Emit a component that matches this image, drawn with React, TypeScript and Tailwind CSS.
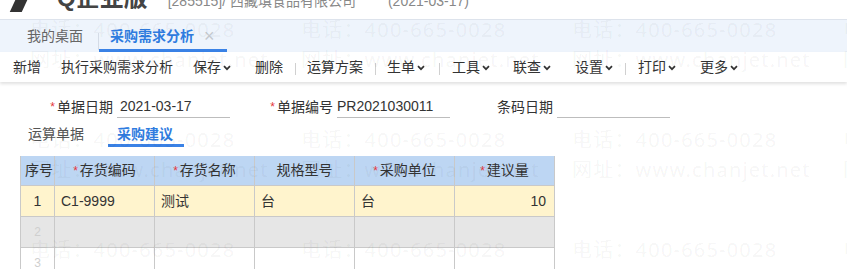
const marks = [
  { x: 30, y: 30, t: '电话：400-665-0028' },
  { x: 301, y: 30, t: '电话：400-665-0028' },
  { x: 572, y: 30, t: '电话：400-665-0028' },
  { x: 843, y: 30, t: '电话：400-665-0028' },
  { x: 30, y: 60, t: '网址：www.chanjet.net' },
  { x: 301, y: 60, t: '网址：www.chanjet.net' },
  { x: 572, y: 60, t: '网址：www.chanjet.net' },
  { x: 843, y: 60, t: '网址：www.chanjet.net' },
  { x: 30, y: 140, t: '电话：400-665-0028' },
  { x: 301, y: 140, t: '电话：400-665-0028' },
  { x: 572, y: 140, t: '电话：400-665-0028' },
  { x: 843, y: 140, t: '电话：400-665-0028' },
  { x: 30, y: 170, t: '网址：www.chanjet.net' },
  { x: 301, y: 170, t: '网址：www.chanjet.net' },
  { x: 572, y: 170, t: '网址：www.chanjet.net' },
  { x: 843, y: 170, t: '网址：www.chanjet.net' },
  { x: 30, y: 250, t: '电话：400-665-0028' },
  { x: 301, y: 250, t: '电话：400-665-0028' },
  { x: 572, y: 250, t: '电话：400-665-0028' },
  { x: 843, y: 250, t: '电话：400-665-0028' },
]

function Chevron() {
  return (
    <svg width="8" height="6" viewBox="0 0 8 6" className="ml-[2px] mt-[1px]">
      <path d="M1 1.2l3 3 3-3" fill="none" stroke="#333" strokeWidth="1.7" />
    </svg>
  )
}

function Sep() {
  return <span className="w-px h-[12px] bg-[#d0d0d0] mt-[3px]" />
}

function Star() {
  return <span className="text-[#e5383b] text-[12px] mr-[2px]">*</span>
}

const cols = [
  { w: 'w-[34px]', label: '序号', star: false, align: 'text-left pl-[4px]' },
  { w: 'w-[100px]', label: '存货编码', star: true, align: 'text-center' },
  { w: 'w-[100px]', label: '存货名称', star: true, align: 'text-center' },
  { w: 'w-[100px]', label: '规格型号', star: false, align: 'text-center' },
  { w: 'w-[100px]', label: '采购单位', star: true, align: 'text-center' },
  { w: 'w-[100px]', label: '建议量', star: true, align: 'text-center' },
]

export default function App() {
  return (
    <div className="relative w-[847px] h-[269px] overflow-hidden bg-white text-[#333] text-[14px] font-['Liberation_Sans','Noto_Sans_CJK_SC',sans-serif]">
      {/* top header, cut off */}
      <div className="h-[19px] overflow-hidden">
        <div className="-mt-[15px] flex items-baseline h-[26px] leading-[26px]">
          <span className="ml-[13px] w-[12px] h-[14px] bg-[#333] skew-x-[-25deg] self-start mt-[13px]" />
          <span className="ml-[32px] text-[24px] font-bold text-[#444]">Q企业版</span>
          <span className="ml-[20px] text-[14px] text-[#888]">[285515]/ 西藏填食品有限公司</span>
          <span className="ml-[32px] text-[14px] text-[#888]">(2021-03-17)</span>
        </div>
      </div>

      {/* tab bar */}
      <div className="h-[33px] border-t border-[#dde3ec] bg-[#eef4fc] flex items-end">
        <div className="h-[32px] flex items-center pl-[27px] pr-[15px] text-[#666]">我的桌面</div>
        <div className="w-px h-[17px] bg-[#d4dbe6] mb-[2px]" />
        <div className="h-[32px] w-[128px] flex items-center pl-[11px] border-b-[3px] border-[#3a82e6]">
          <span className="text-[#2f7ce0] font-bold pt-[3px]">采购需求分析</span>
          <span className="ml-[10px] text-[18px] leading-none text-[#c4c8ce] pt-[2px]">×</span>
        </div>
      </div>

      {/* toolbar */}
      <div className="h-[30px] bg-white shadow-[0_2px_3px_rgba(0,0,0,0.12)] flex items-center pl-[13px] leading-[20px] relative z-10">
        <span>新增</span>
        <span className="ml-[20px]">执行采购需求分析</span>
        <span className="ml-[20px] flex items-center">保存<Chevron /></span>
        <span className="ml-[24px]">删除</span>
        <span className="ml-[12px] flex"><Sep /></span>
        <span className="ml-[11px]">运算方案</span>
        <span className="ml-[12px] flex"><Sep /></span>
        <span className="ml-[11px] flex items-center">生单<Chevron /></span>
        <span className="ml-[14px] flex"><Sep /></span>
        <span className="ml-[12px] flex items-center">工具<Chevron /></span>
        <span className="ml-[23px] flex items-center">联查<Chevron /></span>
        <span className="ml-[24px] flex items-center">设置<Chevron /></span>
        <span className="ml-[12px] flex"><Sep /></span>
        <span className="ml-[12px] flex items-center">打印<Chevron /></span>
        <span className="ml-[24px] flex items-center">更多<Chevron /></span>
      </div>

      {/* form */}
      <div className="mt-[14px] flex pl-[10px] h-[22px]">
        <div className="w-[220px] flex">
          <div className="w-[107px] flex items-center justify-end pr-[4px]"><Star />单据日期</div>
          <div className="w-[113px] border-b border-[#bdbdbd] flex items-center pl-[3px]">2021-03-17</div>
        </div>
        <div className="w-[220px] flex">
          <div className="w-[107px] flex items-center justify-end pr-[4px]"><Star />单据编号</div>
          <div className="w-[113px] border-b border-[#bdbdbd] flex items-center">PR2021030011</div>
        </div>
        <div className="w-[220px] flex">
          <div className="w-[107px] flex items-center justify-end pr-[4px]">条码日期</div>
          <div className="w-[113px] border-b border-[#bdbdbd]" />
        </div>
      </div>

      {/* sub tabs */}
      <div className="mt-[6px] flex pl-[19px] leading-[20px]">
        <div className="px-[9px] pb-[3px] text-[#555]">运算单据</div>
        <div className="ml-[15px] px-[9px] pr-[11px] border-b-[3px] border-[#3a82e6] text-[#2f7ce0] font-bold">采购建议</div>
      </div>

      {/* table */}
      <div className="mt-[9px] ml-[20px] w-[535px] border-l border-[#c9c9c9]">
        <div className="flex h-[29px] bg-[#bdd6f3]">
          {cols.map((c) => (
            <div key={c.label} className={`${c.w} ${c.align} border-r border-[#c9c9c9] leading-[29px]`}>
              {c.star && <Star />}{c.label}
            </div>
          ))}
        </div>
        <div className="flex h-[31px] bg-[#fff4cd] border-t border-[#c9c9c9] leading-[30px]">
          <div className="w-[34px] text-center border-r border-[#c9c9c9]">1</div>
          <div className="w-[100px] pl-[6px] border-r border-[#c9c9c9]">C1-9999</div>
          <div className="w-[100px] pl-[6px] border-r border-[#c9c9c9]">测试</div>
          <div className="w-[100px] pl-[6px] border-r border-[#c9c9c9]">台</div>
          <div className="w-[100px] pl-[6px] border-r border-[#c9c9c9]">台</div>
          <div className="w-[100px] pr-[8px] text-right border-r border-[#c9c9c9]">10</div>
        </div>
        <div className="flex h-[31px] bg-[#e6e6e6] border-t border-[#c9c9c9] leading-[30px]">
          <div className="w-[34px] text-center border-r border-[#c9c9c9] text-[12px] text-[#cfcfcf]">2</div>
          {[0, 1, 2, 3, 4].map((i) => <div key={i} className="w-[100px] border-r border-[#c9c9c9]" />)}
        </div>
        <div className="flex h-[31px] bg-white border-t border-[#c9c9c9] leading-[30px]">
          <div className="w-[34px] text-center border-r border-[#c9c9c9] text-[12px] text-[#cfcfcf]">3</div>
          {[0, 1, 2, 3, 4].map((i) => <div key={i} className="w-[100px] border-r border-[#c9c9c9]" />)}
        </div>
      </div>

      {/* watermark */}
      <div className="absolute inset-0 pointer-events-none z-20">
        {marks.map((m, i) => (
          <span
            key={i}
            className="absolute whitespace-nowrap text-[20px] leading-[24px] tracking-[1.2px] text-black/[0.05] font-['Noto_Sans','Noto_Sans_CJK_SC',sans-serif]"
            style={{ left: m.x, top: m.y - 12 }}
          >
            {m.t}
          </span>
        ))}
      </div>
    </div>
  )
}
